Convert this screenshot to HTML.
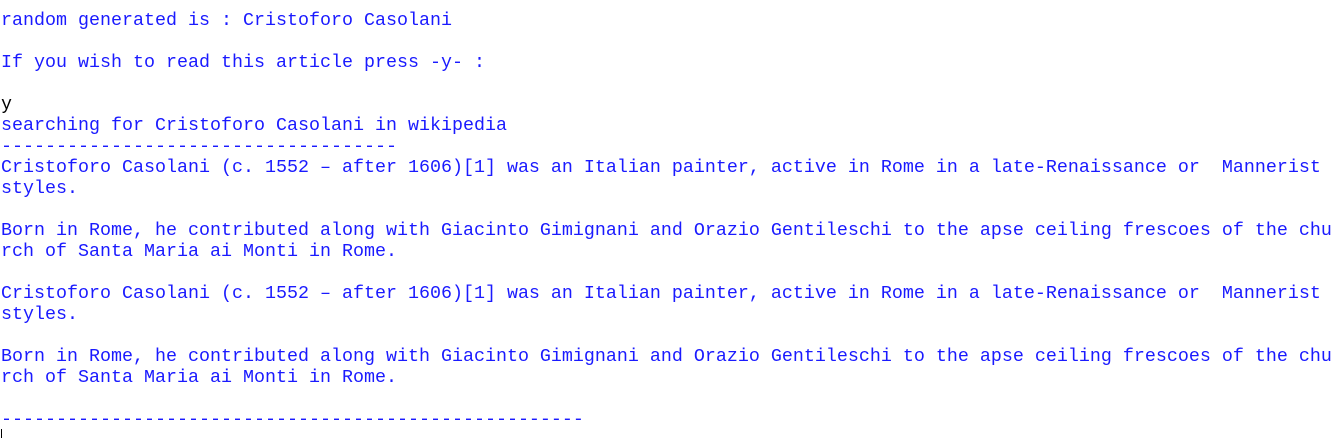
<!DOCTYPE html>
<html><head><meta charset="utf-8"><style>
html,body{margin:0;padding:0;background:#fff;width:1341px;height:438px;overflow:hidden}
pre{margin:0;position:absolute;left:1px;top:10px;font-family:"Liberation Mono",monospace;font-size:18.33px;line-height:21px;color:#1a1aff;white-space:pre}
.k{color:#000}
.cur{position:absolute;left:1px;top:429px;width:1px;height:9px;background:#000}
</style></head><body>
<pre>random generated is : Cristoforo Casolani

If you wish to read this article press -y- :

<span class="k">y</span>
searching for Cristoforo Casolani in wikipedia
------------------------------------
Cristoforo Casolani (c. 1552 – after 1606)[1] was an Italian painter, active in Rome in a late-Renaissance or  Mannerist
styles.

Born in Rome, he contributed along with Giacinto Gimignani and Orazio Gentileschi to the apse ceiling frescoes of the chu
rch of Santa Maria ai Monti in Rome.

Cristoforo Casolani (c. 1552 – after 1606)[1] was an Italian painter, active in Rome in a late-Renaissance or  Mannerist
styles.

Born in Rome, he contributed along with Giacinto Gimignani and Orazio Gentileschi to the apse ceiling frescoes of the chu
rch of Santa Maria ai Monti in Rome.

-----------------------------------------------------</pre>
<div class="cur"></div>
</body></html>
